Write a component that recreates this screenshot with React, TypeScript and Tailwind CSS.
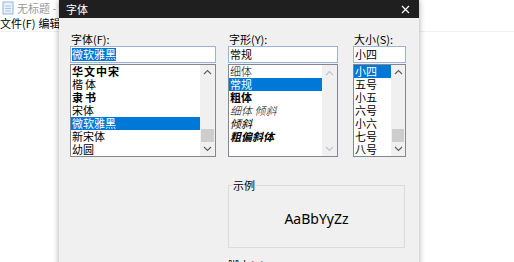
const cjk = "font-[family-name:'Noto_Sans_CJK_SC','Noto_Sans',sans-serif]"

type Item = { label: string; className?: string }

const fontItems: Item[] = [
  { label: "华文中宋", className: "font-bold tracking-[1px]" },
  { label: "楷体", className: "text-[10px] text-[#666] tracking-[2px]" },
  { label: "隶书", className: "text-[10px] font-bold tracking-[2px]" },
  { label: "宋体" },
  { label: "微软雅黑" },
  { label: "新宋体" },
  { label: "幼圆", className: "text-[#555]" },
]

const styleItems: Item[] = [
  { label: "细体", className: "font-light" },
  { label: "常规" },
  { label: "粗体", className: "font-bold" },
  { label: "细体 倾斜", className: "italic font-light text-[#555]" },
  { label: "倾斜", className: "italic" },
  { label: "粗偏斜体", className: "italic font-bold" },
]

const sizeItems: Item[] = [
  { label: "小四" },
  { label: "五号" },
  { label: "小五" },
  { label: "六号" },
  { label: "小六" },
  { label: "七号" },
  { label: "八号" },
]

const Chevron = ({ up, disabled }: { up?: boolean; disabled?: boolean }) => (
  <svg width="9" height="6" viewBox="0 0 9 6" fill="none">
    <polyline
      points={up ? "1,5 4.5,1.5 8,5" : "1,1 4.5,4.5 8,1"}
      stroke={disabled ? "#c4c4c4" : "#606060"}
      strokeWidth="1.2"
    />
  </svg>
)

const ListBox = ({
  items,
  selected,
  itemsWidth,
  barWidth,
  thumb,
  disabled,
}: {
  items: Item[]
  selected: number
  itemsWidth: string
  barWidth: string
  thumb?: boolean
  disabled?: boolean
}) => (
  <div className="mt-[1px] h-[93px] flex border border-[#828790] bg-white">
    <div className={`${itemsWidth} flex flex-col`}>
      {items.map((item, i) => (
        <div
          key={item.label}
          className={`h-[13px] leading-[13px] pl-[1px] text-[11px] whitespace-nowrap ${
            i === selected ? "bg-[#0078d7] text-white" : "text-black"
          } ${item.className ?? ""}`}
        >
          {item.label}
        </div>
      ))}
    </div>
    <div className={`${barWidth} flex flex-col bg-[#f0f0f0]`}>
      <div className="h-[15px] flex items-center justify-center">
        <Chevron up disabled={disabled} />
      </div>
      <div className="flex-1">
        {thumb && <div className="mt-[49px] mx-[1px] h-[13px] bg-[#cdcdcd]" />}
      </div>
      <div className="h-[15px] flex items-center justify-center">
        <Chevron disabled={disabled} />
      </div>
    </div>
  </div>
)

const Field = ({ label, children }: { label: string; children: React.ReactNode }) => (
  <>
    <div className="h-[13px] leading-[13px] text-[11px] text-black pl-[1px]">{label}</div>
    <div className="h-[17px] border border-[#9bb3d4] bg-white flex items-center pl-[1px] text-[11px] leading-[13px] text-black">
      {children}
    </div>
  </>
)

const NotepadIcon = () => (
  <svg width="12" height="14" viewBox="0 0 12 14">
    <rect x="1" y="1" width="10" height="12" fill="#e8f1fb" stroke="#8fb4de" />
    <line x1="3" y1="5" x2="9" y2="5" stroke="#a9c6e8" />
    <line x1="3" y1="7.5" x2="9" y2="7.5" stroke="#a9c6e8" />
    <line x1="3" y1="10" x2="9" y2="10" stroke="#a9c6e8" />
  </svg>
)

export default function App() {
  return (
    <div className={`relative w-[514px] h-[262px] overflow-hidden bg-white ${cjk}`}>
      {/* Notepad window behind */}
      <div className="h-[16px] flex items-center gap-[3px] pl-[2px] text-[11px] text-[#9a9a9a]">
        <NotepadIcon />
        <span>无标题 - 记事本</span>
      </div>
      <div className="h-[16px] flex items-center gap-[3px] text-[11px] text-black border-b border-[#f0f0f0]">
        <span>文件(F)</span>
        <span>编辑(E)</span>
      </div>

      {/* Font dialog */}
      <div className="absolute left-[59px] top-0 w-[360px] h-[280px] flex flex-col bg-[#f0f0f0] shadow-[0_0_6px_rgba(0,0,0,0.35)]">
        <div className="h-[18px] bg-[#1f1f1f] flex items-center justify-between pl-[7px] pr-[9px] text-white text-[11px]">
          <span>字体</span>
          <svg width="9" height="9" viewBox="0 0 9 9">
            <path d="M1 1 L8 8 M8 1 L1 8" stroke="#ffffff" strokeWidth="1.2" />
          </svg>
        </div>

        <div className="pt-[15px] pl-[11px] flex">
          <div className="w-[146px] flex flex-col">
            <Field label="字体(F):">
              <span className="bg-[#0078d7] text-white">微软雅黑</span>
            </Field>
            <ListBox items={fontItems} selected={4} itemsWidth="w-[129px]" barWidth="w-[15px]" thumb />
          </div>
          <div className="ml-[12px] w-[110px] flex flex-col">
            <Field label="字形(Y):">常规</Field>
            <ListBox items={styleItems} selected={1} itemsWidth="w-[93px]" barWidth="w-[15px]" disabled />
          </div>
          <div className="ml-[15px] w-[53px] flex flex-col">
            <Field label="大小(S):">小四</Field>
            <ListBox items={sizeItems} selected={0} itemsWidth="w-[37px]" barWidth="w-[14px]" thumb />
          </div>
        </div>

        <fieldset className="ml-[169px] mt-[22px] w-[177px] h-[69px] border border-[#dcdcdc] px-[4px] flex items-start justify-center">
          <legend className="text-[11px] text-black leading-[13px] px-0">示例</legend>
          <span className="mt-[17px] text-[14px] leading-[20px] text-black font-[family-name:'Noto_Sans',sans-serif]">AaBbYyZz</span>
        </fieldset>

        <div className="ml-[169px] mt-[11px] text-[11px] leading-[13px] text-black">脚本(R):</div>
      </div>
    </div>
  )
}
